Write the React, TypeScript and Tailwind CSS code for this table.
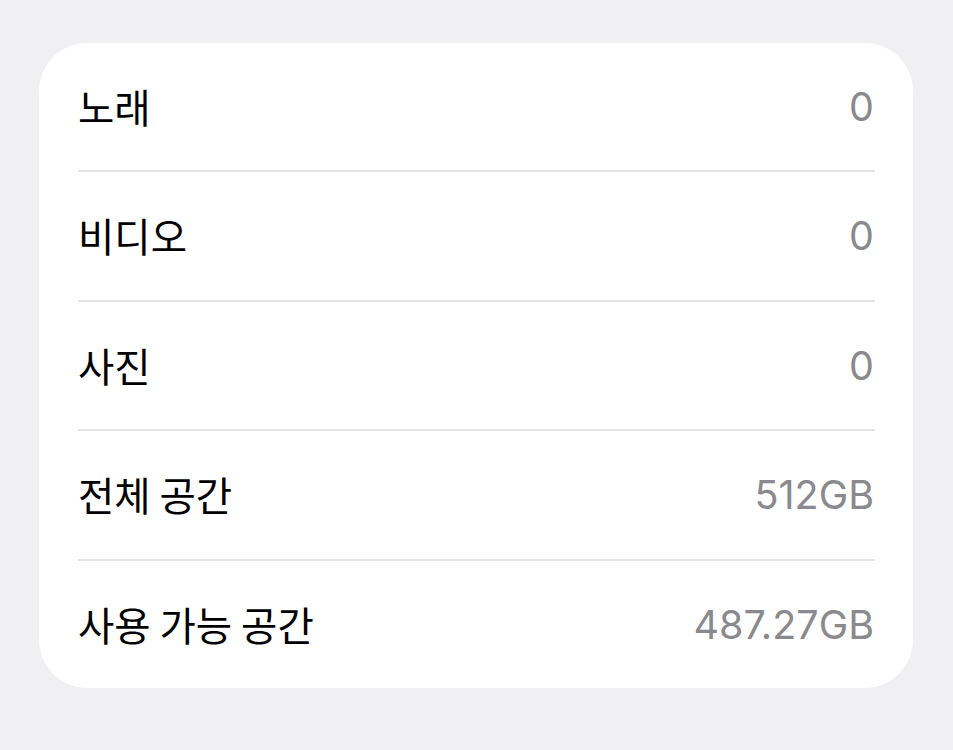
const rows: { label: string; value: string }[] = [
  { label: "노래", value: "0" },
  { label: "비디오", value: "0" },
  { label: "사진", value: "0" },
  { label: "전체 공간", value: "512GB" },
  { label: "사용 가능 공간", value: "487.27GB" },
];

export default function App() {
  return (
    <div className="w-[953px] h-[750px] bg-[#f0f0f3] pt-[43px] pl-[39px] font-['Inter','Noto_Sans_CJK_KR',sans-serif]">
      <div className="w-[874px] h-[645px] bg-white rounded-[48px] flex flex-col">
        {rows.map((row, i) => (
          <div
            key={row.label}
            className={`ml-[39px] mr-[38px] flex-1 flex items-center justify-between ${
              i < rows.length - 1 ? "border-b-[2px] border-[#e4e4e6]" : ""
            }`}
          >
            <span className="text-[39.5px] leading-none text-black font-['Noto_Sans_CJK_KR',sans-serif] -mt-[2px]">
              {row.label}
            </span>
            <span className="text-[39.5px] leading-none text-[#8a8a8e] pr-px mt-[2px]">
              {row.value}
            </span>
          </div>
        ))}
      </div>
    </div>
  );
}
